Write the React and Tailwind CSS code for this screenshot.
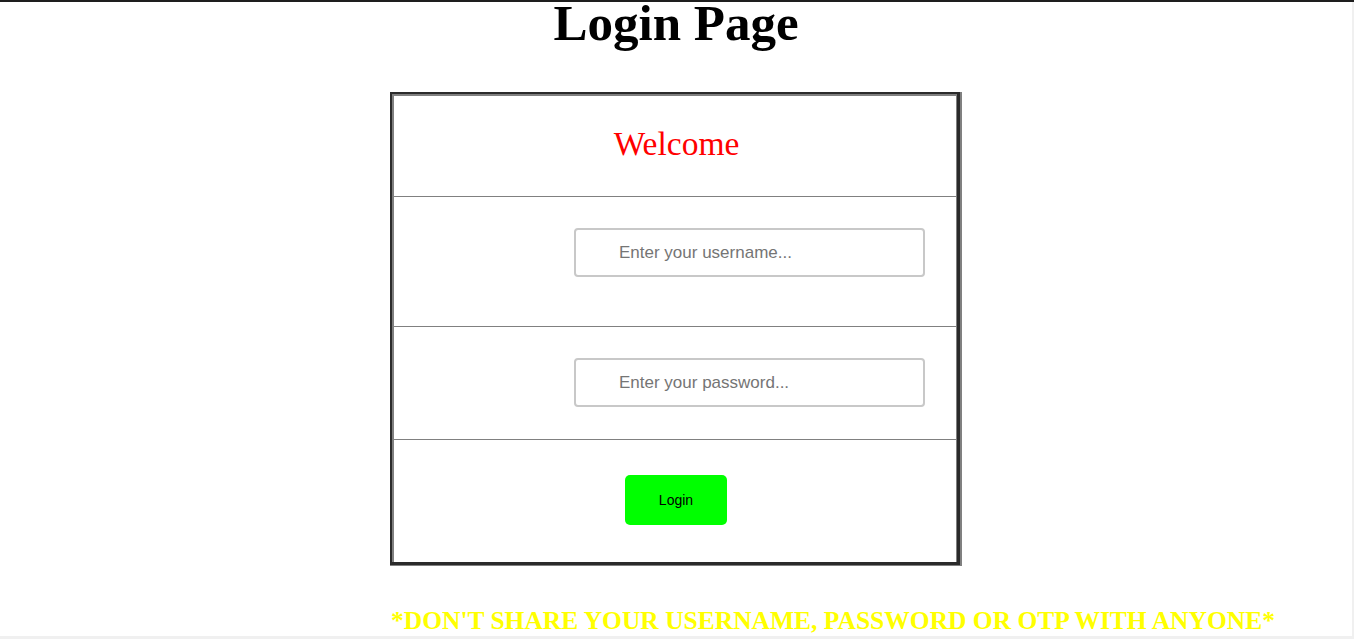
export default function App() {
  return (
    <div className="w-[1354px] h-[639px] overflow-hidden bg-white flex flex-col">
      <div className="h-[2px] w-full bg-[#1e1e1e] shrink-0" />
      <div className="flex flex-1 min-h-0">
        <div className="flex-1 flex flex-col min-w-0">
          <h1
            className="text-[51px] font-bold leading-[42px] text-center text-black"
            style={{ fontFamily: '"Liberation Serif", "Times New Roman", serif' }}
          >
            Login Page
          </h1>
          <div className="flex justify-center mt-[48px]">
            <div className="w-[572px] border-r-2 border-b border-[#808080]">
              <div className="border-l-2 border-t-2 border-r-[3px] border-b-[3px] border-[#2b2b2b]">
                <div className="border-l-2 border-t-2 border-r border-[#808080] flex flex-col">
                  <div
                    className="h-[101px] flex items-center justify-center pb-[4px] pl-[3px] text-[33.5px] text-[#ff0000] border-b border-[#808080]"
                    style={{ fontFamily: '"Liberation Serif", "Times New Roman", serif' }}
                  >
                    Welcome
                  </div>
                  <div className="h-[130px] pt-[31px] pl-[180px] border-b border-[#808080]">
                    <input
                      type="text"
                      placeholder="Enter your username..."
                      className="w-[351px] h-[49px] border-2 border-[#c8c8c8] rounded-[4px] pl-[43px] text-[17px] text-black placeholder:text-[#757575] outline-none"
                      style={{ fontFamily: '"Liberation Sans", Arial, sans-serif' }}
                    />
                  </div>
                  <div className="h-[113px] pt-[31px] pl-[180px] border-b border-[#808080]">
                    <input
                      type="password"
                      placeholder="Enter your password..."
                      className="w-[351px] h-[49px] border-2 border-[#c8c8c8] rounded-[4px] pl-[43px] text-[17px] text-black placeholder:text-[#757575] outline-none"
                      style={{ fontFamily: '"Liberation Sans", Arial, sans-serif' }}
                    />
                  </div>
                  <div className="h-[122px] pt-[35px] flex justify-center pl-[2px]">
                    <button
                      className="w-[102px] h-[50px] bg-[#00ff00] rounded-[5px] text-[14px] text-black"
                      style={{ fontFamily: '"Liberation Sans", Arial, sans-serif' }}
                    >
                      Login
                    </button>
                  </div>
                </div>
              </div>
            </div>
          </div>
          <div
            className="mt-[36px] pl-[391px] text-[25.5px] font-bold text-[#ffff00] whitespace-nowrap"
            style={{ fontFamily: '"Liberation Serif", "Times New Roman", serif' }}
          >
            *DON'T SHARE YOUR USERNAME, PASSWORD OR OTP WITH ANYONE*
          </div>
        </div>
        <div className="w-[2px] bg-[#f0f0f0] shrink-0" />
      </div>
      <div className="h-[3px] w-full bg-[#f0f0f0] shrink-0" />
    </div>
  );
}
